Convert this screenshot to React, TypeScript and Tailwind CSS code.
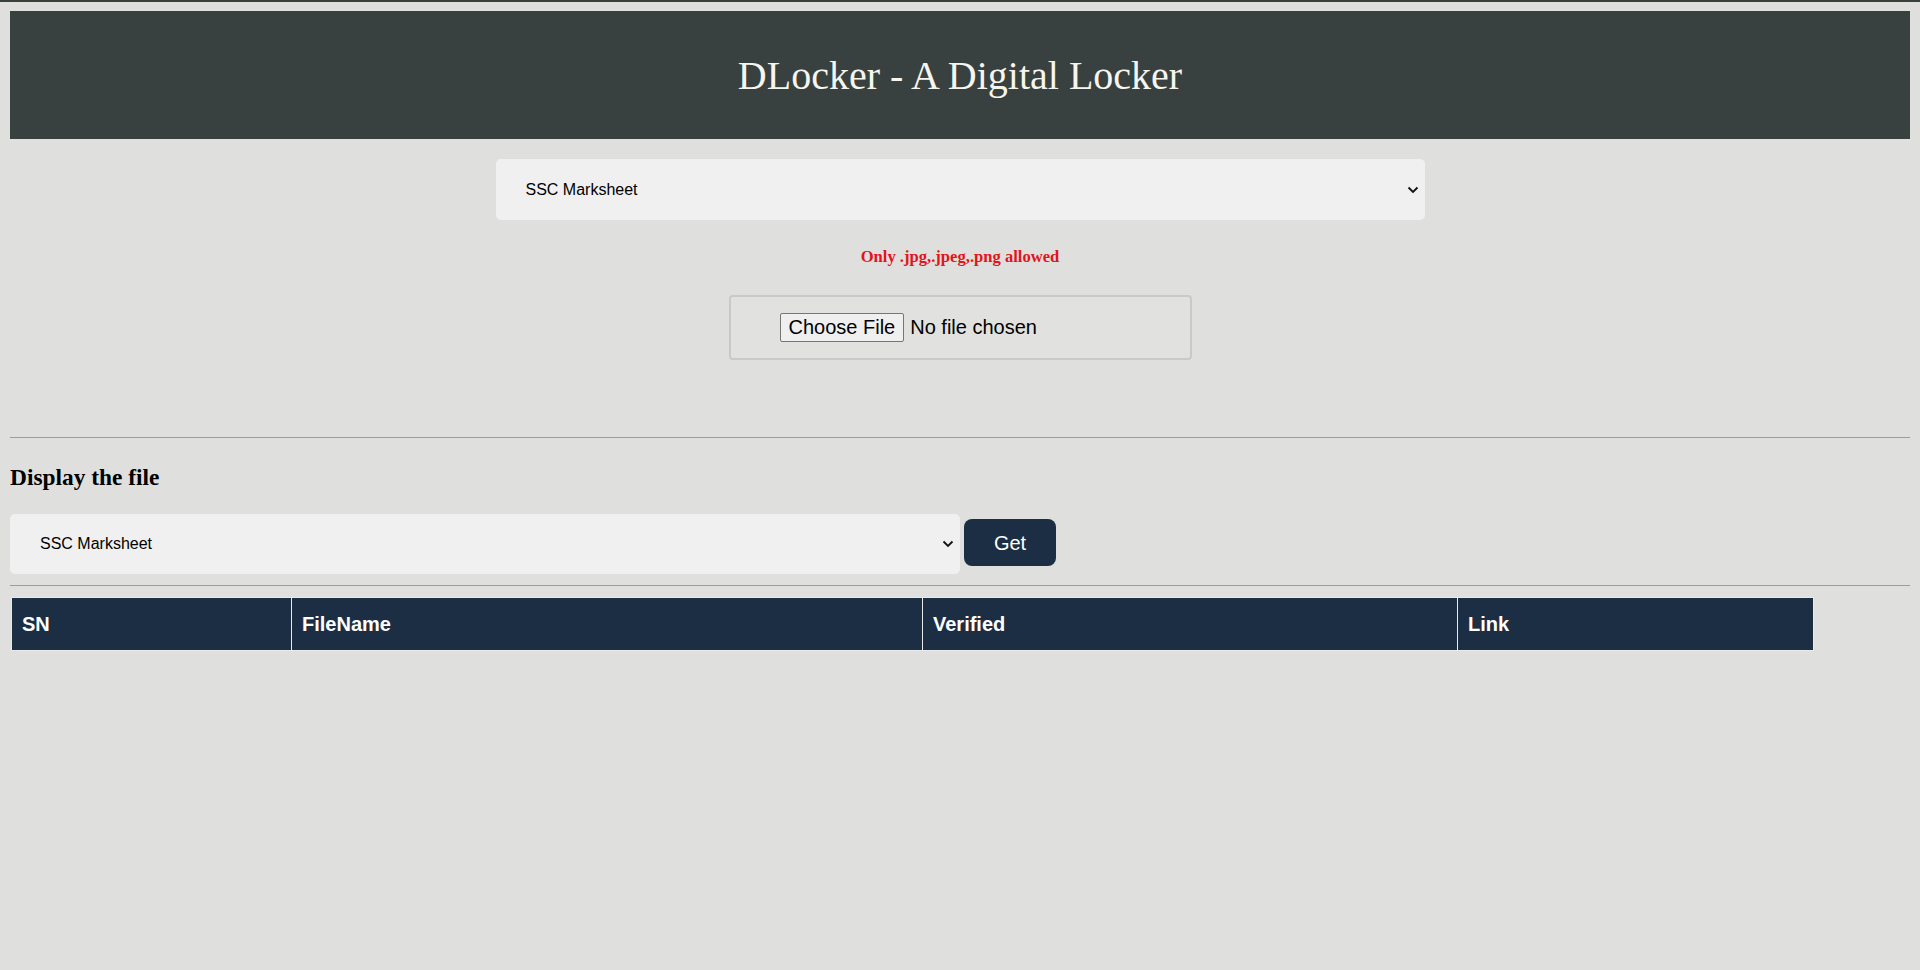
import React from "react";

const Chevron: React.FC = () => (
  <svg
    className="pointer-events-none absolute right-[6px] top-1/2 -translate-y-1/2"
    width="12"
    height="8"
    viewBox="0 0 12 8"
    fill="none"
  >
    <path d="M1.5 1.5 6 6l4.5-4.5" stroke="#111" strokeWidth="1.8" />
  </svg>
);

const DocSelect: React.FC<{ className: string; textPad: string }> = ({
  className,
  textPad,
}) => (
  <div className={"relative " + className}>
    <select
      defaultValue="ssc"
      className={
        "h-full w-full appearance-none rounded-[5px] bg-[#f0f0f0] text-[16px] text-black outline-none " +
        textPad
      }
      style={{ fontFamily: '"Liberation Sans", Arial, sans-serif' }}
    >
      <option value="ssc">SSC Marksheet</option>
      <option value="hsc">HSC Marksheet</option>
      <option value="aadhar">Aadhar Card</option>
      <option value="pan">PAN Card</option>
    </select>
    <Chevron />
  </div>
);

const columns = [
  { label: "SN", width: "w-[280px]" },
  { label: "FileName", width: "w-[631px]" },
  { label: "Verified", width: "w-[535px]" },
  { label: "Link", width: "w-[356px]" },
];

const App: React.FC = () => {
  return (
    <div className="min-h-screen border-t-2 border-[#3b403d] bg-[#dfe0dd] px-[10px] pt-[9px]">
      <header className="bg-[#384140] pt-[42px] pb-[40px] text-center">
        <h1
          className="text-[40px] leading-[46px] text-[#f6f5ee]"
          style={{ fontFamily: '"Liberation Serif", "Times New Roman", serif' }}
        >
          DLocker - A Digital Locker
        </h1>
      </header>

      <div className="flex flex-col items-center">
        <DocSelect className="mt-[20px] h-[61px] w-[929px]" textPad="pl-[30px]" />

        <p
          className="mt-[28px] text-[16.6px] font-bold leading-[18px] text-[#e3141b]"
          style={{ fontFamily: '"Liberation Serif", "Times New Roman", serif' }}
        >
          Only .jpg,.jpeg,.png allowed
        </p>

        <div className="mt-[29px] flex h-[65px] w-[463px] items-center rounded-[4px] border-2 border-[#c9cac7] bg-[#e1e2df] pl-[49px]">
          <input
            type="file"
            accept=".jpg,.jpeg,.png"
            className="text-[20px] leading-[23px] text-black file:mr-[6px] file:rounded-[2px] file:border file:border-[#767676] file:bg-[#efefef] file:px-[8px] file:py-[2px] file:text-black"
            style={{ fontFamily: '"Liberation Sans", Arial, sans-serif' }}
          />
        </div>
      </div>

      <div className="mt-[77px] h-px bg-[#9c9d9b]" />

      <h3
        className="mt-[26px] text-[23.4px] font-bold leading-[26px] text-black"
        style={{ fontFamily: '"Liberation Serif", "Times New Roman", serif' }}
      >
        Display the file
      </h3>

      <div className="mt-[24px] flex items-start gap-[4px]">
        <DocSelect className="h-[60px] w-[950px]" textPad="pl-[30px]" />
        <button
          className="mt-[5px] h-[47px] w-[92px] rounded-[8px] bg-[#1b2e44] text-[20px] text-white"
          style={{ fontFamily: '"Liberation Sans", Arial, sans-serif' }}
        >
          Get
        </button>
      </div>

      <div className="mt-[11px] h-px bg-[#9c9d9b]" />

      <table
        className="ml-px mt-[11px] border-collapse"
        style={{ fontFamily: '"Liberation Sans", Arial, sans-serif' }}
      >
        <thead>
          <tr>
            {columns.map((col) => (
              <th
                key={col.label}
                className={
                  "h-[53px] border border-[#e9eae8] bg-[#1b2e44] pl-[10px] text-left text-[20px] font-bold text-white " +
                  col.width
                }
              >
                {col.label}
              </th>
            ))}
          </tr>
        </thead>
        <tbody></tbody>
      </table>
    </div>
  );
};

export default App;
